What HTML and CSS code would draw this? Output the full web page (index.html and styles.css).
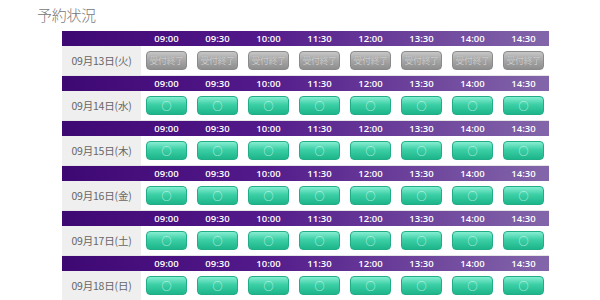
FILE: index.html
```html
<!DOCTYPE html>
<html lang="ja">
<head>
<meta charset="utf-8">
<link rel="stylesheet" href="styles.css">
</head>
<body>
<h2 class="title">予約状況</h2>
<div class="schedule">
  <div class="day">
    <div class="head"><span></span><span>09:00</span><span>09:30</span><span>10:00</span><span>11:30</span><span>12:00</span><span>13:30</span><span>14:00</span><span>14:30</span></div>
    <div class="row"><span class="date">09月13日(火)</span><span class="cell"><b class="btn closed">受付終了</b></span><span class="cell"><b class="btn closed">受付終了</b></span><span class="cell"><b class="btn closed">受付終了</b></span><span class="cell"><b class="btn closed">受付終了</b></span><span class="cell"><b class="btn closed">受付終了</b></span><span class="cell"><b class="btn closed">受付終了</b></span><span class="cell"><b class="btn closed">受付終了</b></span><span class="cell"><b class="btn closed">受付終了</b></span></div>
  </div>
  <div class="day">
    <div class="head"><span></span><span>09:00</span><span>09:30</span><span>10:00</span><span>11:30</span><span>12:00</span><span>13:30</span><span>14:00</span><span>14:30</span></div>
    <div class="row"><span class="date">09月14日(水)</span><span class="cell"><b class="btn open">○</b></span><span class="cell"><b class="btn open">○</b></span><span class="cell"><b class="btn open">○</b></span><span class="cell"><b class="btn open">○</b></span><span class="cell"><b class="btn open">○</b></span><span class="cell"><b class="btn open">○</b></span><span class="cell"><b class="btn open">○</b></span><span class="cell"><b class="btn open">○</b></span></div>
  </div>
  <div class="day">
    <div class="head"><span></span><span>09:00</span><span>09:30</span><span>10:00</span><span>11:30</span><span>12:00</span><span>13:30</span><span>14:00</span><span>14:30</span></div>
    <div class="row"><span class="date">09月15日(木)</span><span class="cell"><b class="btn open">○</b></span><span class="cell"><b class="btn open">○</b></span><span class="cell"><b class="btn open">○</b></span><span class="cell"><b class="btn open">○</b></span><span class="cell"><b class="btn open">○</b></span><span class="cell"><b class="btn open">○</b></span><span class="cell"><b class="btn open">○</b></span><span class="cell"><b class="btn open">○</b></span></div>
  </div>
  <div class="day">
    <div class="head"><span></span><span>09:00</span><span>09:30</span><span>10:00</span><span>11:30</span><span>12:00</span><span>13:30</span><span>14:00</span><span>14:30</span></div>
    <div class="row"><span class="date">09月16日(金)</span><span class="cell"><b class="btn open">○</b></span><span class="cell"><b class="btn open">○</b></span><span class="cell"><b class="btn open">○</b></span><span class="cell"><b class="btn open">○</b></span><span class="cell"><b class="btn open">○</b></span><span class="cell"><b class="btn open">○</b></span><span class="cell"><b class="btn open">○</b></span><span class="cell"><b class="btn open">○</b></span></div>
  </div>
  <div class="day">
    <div class="head"><span></span><span>09:00</span><span>09:30</span><span>10:00</span><span>11:30</span><span>12:00</span><span>13:30</span><span>14:00</span><span>14:30</span></div>
    <div class="row"><span class="date">09月17日(土)</span><span class="cell"><b class="btn open">○</b></span><span class="cell"><b class="btn open">○</b></span><span class="cell"><b class="btn open">○</b></span><span class="cell"><b class="btn open">○</b></span><span class="cell"><b class="btn open">○</b></span><span class="cell"><b class="btn open">○</b></span><span class="cell"><b class="btn open">○</b></span><span class="cell"><b class="btn open">○</b></span></div>
  </div>
  <div class="day">
    <div class="head"><span></span><span>09:00</span><span>09:30</span><span>10:00</span><span>11:30</span><span>12:00</span><span>13:30</span><span>14:00</span><span>14:30</span></div>
    <div class="row"><span class="date">09月18日(日)</span><span class="cell"><b class="btn open">○</b></span><span class="cell"><b class="btn open">○</b></span><span class="cell"><b class="btn open">○</b></span><span class="cell"><b class="btn open">○</b></span><span class="cell"><b class="btn open">○</b></span><span class="cell"><b class="btn open">○</b></span><span class="cell"><b class="btn open">○</b></span><span class="cell"><b class="btn open">○</b></span></div>
  </div>
</div>
</body>
</html>
```
FILE: styles.css
```css
html, body {
  margin: 0;
  padding: 0;
  background: #ffffff;
  font-family: "Noto Sans CJK JP", "Noto Sans", sans-serif;
}
.title {
  margin: 0;
  padding: 5px 0 0 37px;
  height: 26px;
  box-sizing: border-box;
  font-size: 15px;
  line-height: 20px;
  font-weight: 300;
  color: #777777;
  letter-spacing: -0.3px;
}
.schedule {
  margin-left: 62px;
  width: 487px;
  padding-top: 5px;
}
.head, .row {
  display: grid;
  grid-template-columns: 79px repeat(8, 51px);
}
.head {
  height: 15px;
  background: linear-gradient(to right, #3e0873 0%, #52198a 40%, #8366aa 100%);
  color: #ffffff;
  font-family: "Open Sans", "Noto Sans", sans-serif;
  font-size: 9.5px;
  font-weight: 600;
  line-height: 15px;
}
.head span {
  text-align: center;
}
.row {
  height: 30px;
  box-sizing: border-box;
  border-bottom: 1px solid #e6e6e6;
}
.date {
  background: #efefef;
  color: #666666;
  font-size: 10.5px;
  line-height: 29px;
  text-align: center;
  letter-spacing: -0.2px;
}
.cell {
  display: flex;
  align-items: center;
  justify-content: center;
}
.btn {
  display: flex;
  align-items: center;
  justify-content: center;
  width: 41px;
  height: 19px;
  box-sizing: border-box;
  border-radius: 4px;
  font-weight: 400;
}
.btn.open {
  background: linear-gradient(to bottom, #86eed2 0%, #3ccfa5 45%, #1db58b 100%);
  border: 1px solid #22ad86;
  color: #d2f8ec;
  font-size: 10px;
  line-height: 1;
}
.btn.closed {
  background: linear-gradient(to bottom, #c6c6c6 0%, #a6a6a6 50%, #8e8e8e 100%);
  border: 1px solid #8a8a8a;
  color: #cdcdcd;
  font-size: 9px;
  letter-spacing: -0.5px;
  white-space: nowrap;
  text-shadow: 0 0 1px #8c8c8c;
}
```
